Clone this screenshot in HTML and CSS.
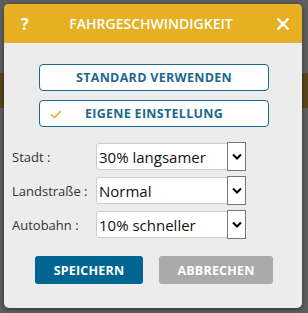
FILE: index.html
```html
<!DOCTYPE html>
<html lang="de">
<head>
  <meta charset="UTF-8" />
  <meta name="viewport" content="width=device-width, initial-scale=1" />
  <title>Fahrgeschwindigkeit</title>
  <link rel="stylesheet" href="styles.css">
</head>
<body>
  <div class="dialog">
    <div class="dialog-header">
      <span class="help">?</span>
      <h2>FAHRGESCHWINDIGKEIT</h2>
      <span class="close">
        <svg width="12" height="12" viewBox="0 0 12 12">
          <path d="M1.5 1.5 L10.5 10.5 M10.5 1.5 L1.5 10.5" stroke="#fff" stroke-width="2.4" stroke-linecap="square" />
        </svg>
      </span>
    </div>

    <div class="dialog-body">
      <div class="mode-buttons">
        <button class="mode">STANDARD VERWENDEN</button>
        <button class="mode active">
          <svg class="check" width="12" height="9" viewBox="0 0 12 9">
            <path d="M1 4.5 L4.5 7.5 L11 1" fill="none" stroke="#e6b022" stroke-width="1.6" />
          </svg>
          EIGENE EINSTELLUNG
        </button>
      </div>

      <div class="rows">
        <div class="row">
          <label>Stadt :</label>
          <div class="dropdown">
            <span class="value">30% langsamer</span>
            <span class="arrow">
              <svg width="10" height="7" viewBox="0 0 10 7"><path d="M1 1.5 L5 5.5 L9 1.5" fill="none" stroke="#000" stroke-width="2" /></svg>
            </span>
          </div>
        </div>
        <div class="row">
          <label>Landstraße :</label>
          <div class="dropdown">
            <span class="value">Normal</span>
            <span class="arrow">
              <svg width="10" height="7" viewBox="0 0 10 7"><path d="M1 1.5 L5 5.5 L9 1.5" fill="none" stroke="#000" stroke-width="2" /></svg>
            </span>
          </div>
        </div>
        <div class="row">
          <label>Autobahn :</label>
          <div class="dropdown">
            <span class="value">10% schneller</span>
            <span class="arrow">
              <svg width="10" height="7" viewBox="0 0 10 7"><path d="M1 1.5 L5 5.5 L9 1.5" fill="none" stroke="#000" stroke-width="2" /></svg>
            </span>
          </div>
        </div>
      </div>

      <div class="actions">
        <button class="save">SPEICHERN</button>
        <button class="cancel">ABBRECHEN</button>
      </div>
    </div>
  </div>
</body>
</html>
```

FILE: styles.css
```css
html, body {
  margin: 0;
  height: 100%;
}

body {
  font-family: 'Open Sans', sans-serif;
  background: linear-gradient(to bottom, #5e5e5e 0, #5e5e5e 73px, #58461a 73px, #58461a 108px, #5e5e5e 108px);
  padding: 4px 6px 5px 4px;
  box-sizing: border-box;
  overflow: hidden;
}

.dialog {
  background: #ececec;
  border-radius: 5px;
  height: 304px;
  box-shadow: 0 1px 4px rgba(0,0,0,0.5);
  overflow: hidden;
  display: flex;
  flex-direction: column;
}

.dialog-header {
  background: #e6b022;
  height: 39px;
  display: flex;
  align-items: center;
  padding: 0 13px 0 17px;
  color: #fff;
}

.dialog-header h2 {
  flex: 1;
  margin: 0;
  text-align: center;
  font-size: 14px;
  font-weight: 600;
  padding-right: 4px;
}

.help {
  font-size: 16px;
  font-weight: 700;
  width: 8px;
}

.close {
  display: flex;
  margin-top: 1px;
}

.dialog-body {
  flex: 1;
  display: flex;
  flex-direction: column;
  padding: 21px 8px 0 8px;
}

.mode-buttons {
  display: flex;
  flex-direction: column;
  align-items: center;
  gap: 9px;
  padding-left: 2px;
}

button {
  font-family: 'Open Sans', sans-serif;
  cursor: pointer;
}

.mode {
  position: relative;
  width: 230px;
  height: 27px;
  background: #fff;
  border: 1px solid #1d6890;
  border-radius: 4px;
  color: #1d6890;
  font-size: 12.5px;
  font-weight: 700;
  letter-spacing: 0.3px;
  padding: 0;
}

.mode .check {
  position: absolute;
  left: 10px;
  top: 9px;
}

.rows {
  display: flex;
  flex-direction: column;
  gap: 7px;
  margin-top: 16px;
}

.row {
  display: flex;
  align-items: center;
}

.row label {
  width: 84px;
  font-size: 13px;
  color: #333;
}

.dropdown {
  width: 150px;
  height: 27px;
  box-sizing: border-box;
  background: #fff;
  border: 1px solid #ccc;
  border-radius: 3px;
  display: flex;
  align-items: center;
}

.dropdown .value {
  flex: 1;
  padding-left: 2px;
  font-size: 15px;
  color: #111;
}

.dropdown .arrow {
  width: 17px;
  height: 27px;
  margin: -1px -1px -1px 0;
  border: 1px solid #777;
  background: #fff;
  display: flex;
  align-items: center;
  justify-content: center;
}

.actions {
  display: flex;
  justify-content: center;
  gap: 16px;
  margin-top: 18px;
  padding-left: 2px;
}

.actions button {
  height: 28px;
  border: none;
  border-radius: 3px;
  color: #fff;
  font-size: 12.5px;
  font-weight: 700;
  letter-spacing: 0.2px;
}

.save {
  width: 108px;
  background: #006591;
}

.cancel {
  width: 114px;
  background: #aaaaaa;
}
```
